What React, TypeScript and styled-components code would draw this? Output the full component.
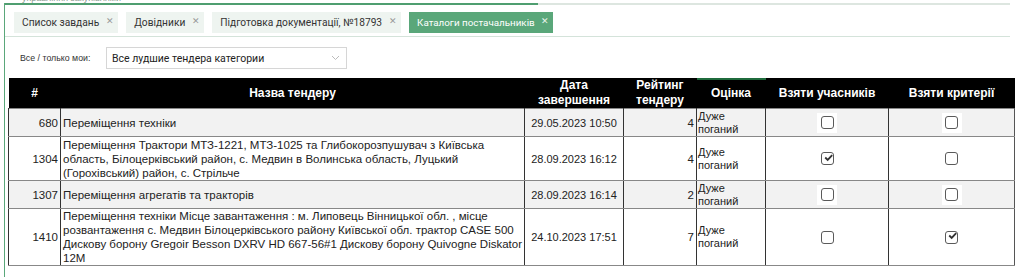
import styled, { createGlobalStyle } from "styled-components";

const GlobalStyle = createGlobalStyle`
  html, body {
    margin: 0;
    padding: 0;
    background: #fff;
    font-family: "Liberation Sans", Arial, sans-serif;
  }
`

const PageBase = styled.div`
  width: 1024px;
  height: 277px;
  overflow: hidden;
  background: #fff;
  box-sizing: border-box;
  padding-left: 4px;
`

const TitleClip = styled.div`
  height: 3px;
  overflow: hidden;
  font-size: 9px;
  line-height: 9px;
  color: #8a9a90;
  padding-left: 18px;
  & span { display: block; margin-top: -6px; }
`

const PanelBase = styled.div`
  border-left: 1px solid #5aa77a;
  height: 274px;
  width: 1006px;
  box-sizing: border-box;
`

const TopLine = styled.div`
  display: flex;
  height: 2px;
  & > div:first-child { width: 533px; background: #4f9e70; }
  & > div:last-child { flex: 1; background: #dde6e0; }
`

const TabBar = styled.div`
  display: flex;
  align-items: center;
  gap: 8px;
  padding: 4px 0 0 9px;
  height: 32px;
  box-sizing: border-box;
  border-bottom: 1px solid #d4e3da;
`

const Tab = styled.div<{ active?: boolean }>`
  display: flex;
  align-items: center;
  height: 21px;
  padding: 0 4px 0 8px;
  font-family: Roboto, "Liberation Sans", sans-serif;
  font-size: ${p => p.active ? "9.8px" : "10.2px"};
  color: ${p => p.active ? "#fff" : "#333"};
  background: ${p => p.active ? "#5aa77a" : "#eef4f0"};
  white-space: nowrap;
  & i {
    font-style: normal;
    font-size: 9px;
    margin-left: ${p => p.active ? "6px" : "7px"};
    margin-top: -4px;
    color: ${p => p.active ? "#e8f4ec" : "#999"};
  }
`

const FilterRow = styled.div`
  display: flex;
  align-items: center;
  padding: 10px 0 0 15px;
`

const FilterLabel = styled.div`
  font-size: 8.8px;
  color: #333;
  width: 86px;
`

const SelectBox = styled.div`
  display: flex;
  align-items: center;
  justify-content: space-between;
  width: 241px;
  height: 22px;
  box-sizing: border-box;
  border: 1px solid #d6d6d6;
  padding: 0 6px 0 5px;
  font-family: Roboto, "Liberation Sans", sans-serif;
  font-size: 10.5px;
  color: #222;
`

const TableWrap = styled.div`
  padding: 9px 0 0 3px;
`

const Table = styled.table`
  border-collapse: collapse;
  width: 1006px;
  table-layout: fixed;
  font-size: 11.5px;
  color: #222;
  border-bottom: 1px solid #ddd;
  & th {
    background: #000;
    color: #fff;
    font-weight: bold;
    font-size: 12px;
    height: 30px;
    padding: 0 2px;
    line-height: 15px;
    text-align: center;
  }
  & th.sorted { box-shadow: inset 0 2px 0 #1f6b3c; }
  & td {
    border: 1px solid #333;
    border-top-color: #888;
    border-bottom-color: #888;
    padding: 0 2px;
    line-height: 14px;
    vertical-align: middle;
  }
  & td:last-child { border-right: 1px solid #555; }
`

const Row = styled.tr<{ shaded?: boolean }>`
  background: ${p => p.shaded ? "#f2f2f2" : "#fff"};
`

const Num = styled.td`
  text-align: right;
`

const DateCell = styled.td`
  text-align: center;
  font-size: 11px;
`

const Center = styled.td`
  text-align: center;
`

const Rating = styled.td`
  text-align: right;
`

const Grade = styled.td`
  padding-left: 1px !important;
  font-size: 11px;
  line-height: 13px !important;
`

const BoxHolder = styled.span<{ shaded?: boolean }>`
  display: inline-flex;
  align-items: center;
  justify-content: center;
  width: 20px;
  height: 20px;
  background: ${p => p.shaded ? "#fff" : "transparent"};
  vertical-align: middle;
`

const Box = styled.span`
  display: inline-flex;
  align-items: center;
  justify-content: center;
  width: 13px;
  height: 13px;
  box-sizing: border-box;
  border: 1.5px solid #5a5a5a;
  border-radius: 3px;
  background: #fff;
`

const Check = ({ checked, shaded }: { checked?: boolean; shaded?: boolean }) => (
  <BoxHolder shaded={shaded}>
    <Box>
      {checked && (
        <svg width="11" height="9" viewBox="0 0 11 9" style={{ marginTop: -3, marginLeft: 2 }}>
          <path d="M1.5 4.5 L4.5 7.5 L10 1.5" stroke="#333" strokeWidth="2.2" fill="none" />
        </svg>
      )}
    </Box>
  </BoxHolder>
)

const rows = [
  { id: 680, name: "Переміщення техніки", date: "29.05.2023 10:50", rating: 4, a: false, b: false, h: 28 },
  { id: 1304, name: "Переміщення Трактори МТЗ-1221, МТЗ-1025 та Глибокорозпушувач з Київська область, Білоцерківський район, с. Медвин в Волинська область, Луцький (Горохівський) район, с. Стрільче", date: "28.09.2023 16:12", rating: 4, a: true, b: false, h: 44 },
  { id: 1307, name: "Переміщення агрегатів та тракторів", date: "28.09.2023 16:14", rating: 2, a: false, b: false, h: 28 },
  { id: 1410, name: "Переміщення техніки Місце завантаження : м. Липовець Вінницької обл. , місце розвантаження с. Медвин Білоцерківського району Київської обл. трактор CASE 500 Дискову борону Gregoir Besson DXRV HD 667-56#1 Дискову борону Quivogne Diskator 12M", date: "24.10.2023 17:51", rating: 7, a: false, b: true, h: 56 },
]

const App = () => {
  return <PageBase>
    <GlobalStyle />
    <TitleClip><span>управління закупівлями</span></TitleClip>
    <PanelBase>
      <TopLine><div /><div /></TopLine>
      <TabBar>
        <Tab>Список завдань<i>✕</i></Tab>
        <Tab>Довідники<i>✕</i></Tab>
        <Tab>Підготовка документації, №18793<i>✕</i></Tab>
        <Tab active>Каталоги постачальників<i>✕</i></Tab>
      </TabBar>
      <FilterRow>
        <FilterLabel>Все / только мои:</FilterLabel>
        <SelectBox>
          Все лудшие тендера категории
          <svg width="9" height="6" viewBox="0 0 9 6"><path d="M1 1 L4.5 4.5 L8 1" stroke="#bbb" fill="none" /></svg>
        </SelectBox>
      </FilterRow>
      <TableWrap>
        <Table>
          <colgroup>
            <col style={{ width: 52 }} />
            <col style={{ width: 464 }} />
            <col style={{ width: 99 }} />
            <col style={{ width: 73 }} />
            <col style={{ width: 69 }} />
            <col style={{ width: 123 }} />
            <col style={{ width: 126 }} />
          </colgroup>
          <thead>
            <tr>
              <th>#</th>
              <th>Назва тендеру</th>
              <th>Дата<br />завершення</th>
              <th>Рейтинг<br />тендеру</th>
              <th className="sorted">Оцінка</th>
              <th>Взяти учасників</th>
              <th>Взяти критерії</th>
            </tr>
          </thead>
          <tbody>
            {rows.map((r, i) => {
              const shaded = i % 2 === 0
              return <Row key={r.id} shaded={shaded} style={{ height: r.h }}>
                <Num>{r.id}</Num>
                <td>{r.name}</td>
                <DateCell>{r.date}</DateCell>
                <Rating>{r.rating}</Rating>
                <Grade>Дуже<br />поганий</Grade>
                <Center><Check checked={r.a} shaded={shaded} /></Center>
                <Center><Check checked={r.b} shaded={shaded} /></Center>
              </Row>
            })}
          </tbody>
        </Table>
      </TableWrap>
    </PanelBase>
  </PageBase>
}

export default App;
